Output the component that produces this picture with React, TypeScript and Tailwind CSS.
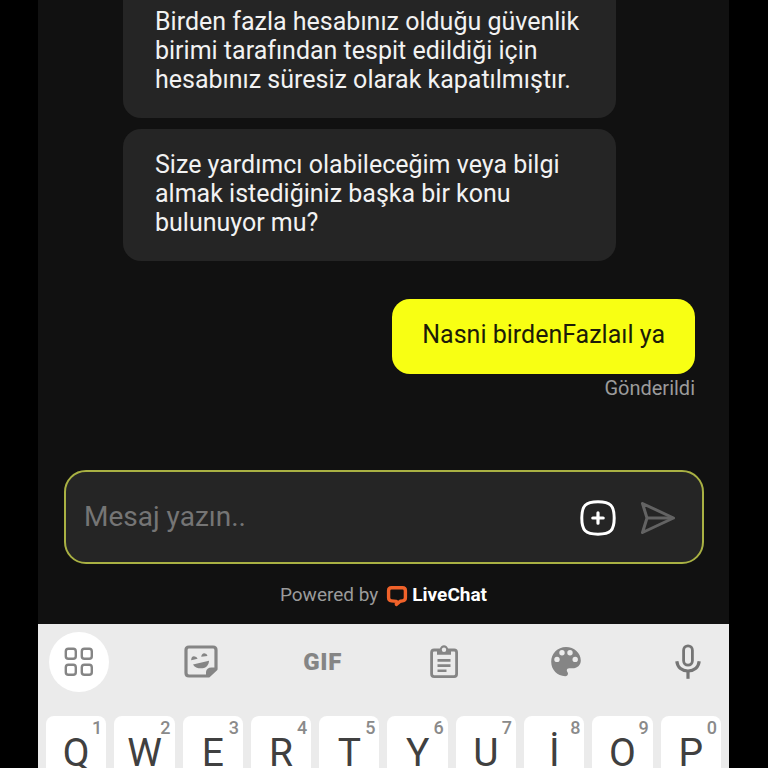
import React, { useState } from "react";

const received = [
  {
    id: 1,
    text: "Birden fazla hesabınız olduğu güvenlik birimi tarafından tespit edildiği için hesabınız süresiz olarak kapatılmıştır.",
    shape: "rounded-b-[18px]",
  },
  {
    id: 2,
    text: "Size yardımcı olabileceğim veya bilgi almak istediğiniz başka bir konu bulunuyor mu?",
    shape: "rounded-[18px]",
  },
];

const keys = [
  { letter: "Q", digit: "1" },
  { letter: "W", digit: "2" },
  { letter: "E", digit: "3" },
  { letter: "R", digit: "4" },
  { letter: "T", digit: "5" },
  { letter: "Y", digit: "6" },
  { letter: "U", digit: "7" },
  { letter: "İ", digit: "8" },
  { letter: "O", digit: "9" },
  { letter: "P", digit: "0" },
];

function GridIcon() {
  return (
    <svg width="36" height="36" viewBox="0 0 36 36" fill="none" stroke="#858585" strokeWidth="2.4">
      <rect x="4.8" y="4.8" width="10" height="10" rx="2.6" />
      <rect x="20.800" y="4.8" width="10" height="10" rx="2.6" />
      <rect x="4.8" y="20.800" width="10" height="10" rx="2.6" />
      <rect x="20.800" y="20.800" width="10" height="10" rx="2.6" />
    </svg>
  );
}

function StickerIcon() {
  return (
    <svg width="36" height="36" viewBox="0 0 36 36" fill="none">
      <path
        d="M6 3H30Q33 3 33 6V25L25.5 32H6Q3 32 3 29V6Q3 3 6 3Z"
        stroke="#858585"
        strokeWidth="3.2"
        strokeLinejoin="round"
      />
      <path d="M33.5 23.500H28.5Q23.500 23.500 23 28V33H25.5L33.8 25.5Z" fill="#858585" />
      <path d="M10 20.500L26 16.800C26 20.500 23.5 23.8 19.5 24.300C15.5 24.700 11.500 23.5 10 20.500Z" fill="#858585" />
      <path d="M8.200 16.200Q8.200 12.5 11 12.300Q13.8 12.300 14.600 14.800Z" fill="#858585" />
      <path d="M18.200 12.800Q18.700 9.400 21.300 9.200Q24 9.400 24.500 12Z" fill="#858585" />
    </svg>
  );
}

function ClipboardIcon() {
  return (
    <svg width="36" height="36" viewBox="0 0 36 36" fill="none">
      <rect x="5.6" y="6" width="25" height="26.6" rx="2.5" stroke="#858585" strokeWidth="2.8" />
      <path
        d="M11 5H13.800C14.300 2.600 16 1.200 18 1.200S21.7 2.600 22.200 5H25V10.8H11Z"
        fill="#858585"
      />
      <circle cx="18" cy="5.800" r="2.2" fill="#ebebeb" />
      <path d="M11.5 16.4H24.5M11.5 21.6H24.5M11.5 26.8H20.5" stroke="#858585" strokeWidth="2.6" />
    </svg>
  );
}

function PaletteIcon() {
  return (
    <svg width="36" height="36" viewBox="0 0 36 36">
      <path
        d="M18 3C9.6 3 3.2 9.6 3.2 17.8C3.2 25.8 9.4 32.2 17.2 32.2C18.9 32.2 20 31 20 29.5C20 28.3 18.8 27.6 18.8 26.4C18.8 25 19.8 24.2 21.2 24.2H24.6C29.2 24.2 32.8 21 32.8 16.4C32.8 9 26.2 3 18 3Z"
        fill="#858585"
      />
      <g fill="#ebebeb">
        <circle cx="9" cy="15.4" r="2.7" />
        <circle cx="14" cy="8.8" r="2.7" />
        <circle cx="22" cy="8.8" r="2.7" />
        <circle cx="27.2" cy="15.4" r="2.7" />
      </g>
    </svg>
  );
}

function MicIcon() {
  return (
    <svg width="36" height="36" viewBox="0 0 36 36" fill="none" stroke="#757575" strokeWidth="2.8">
      <rect x="13.6" y="1.800" width="8.8" height="19.4" rx="4.4" />
      <path d="M6.8 17.2C7.6 23.6 12.2 27 18 27S28.4 23.6 29.2 17.2" strokeWidth="3.2" />
      <path d="M18 27V34.8" strokeWidth="3.2" />
    </svg>
  );
}

function PlusIcon() {
  return (
    <svg width="36" height="36" viewBox="0 0 36 36" fill="none" stroke="#ffffff" strokeLinecap="round">
      <path
        d="M18 1.8C30.5 1.8 34.2 5.5 34.2 18S30.5 34.2 18 34.2S1.8 30.5 1.8 18S5.5 1.8 18 1.8Z"
        strokeWidth="3"
      />
      <path d="M18 12.8V23.2M12.8 18H23.2" strokeWidth="3.2" />
    </svg>
  );
}

function SendIcon() {
  return (
    <svg
      width="36"
      height="36"
      viewBox="0 0 36 36"
      fill="none"
      stroke="#636363"
      strokeWidth="3"
      strokeLinejoin="round"
    >
      <path d="M2.5 3.5L33.5 18L2.5 32.5L7 18Z" />
      <path d="M7 18H33" />
    </svg>
  );
}

function LiveChatLogo() {
  return (
    <svg width="22" height="22" viewBox="0 0 22 22" fill="none">
      <path
        d="M5.5 2.8H16.5Q19.4 2.8 19.4 5.7V12.8Q19.4 15.6 16.6 15.9L14.2 16.2L10.4 19.4V16.4L5.4 15.9Q2.6 15.6 2.6 12.8V5.7Q2.6 2.8 5.5 2.8Z"
        stroke="#f0622a"
        strokeWidth="3.4"
        strokeLinejoin="round"
      />
    </svg>
  );
}

const tools = [
  { id: 1, label: "Menu", icon: <GridIcon />, style: "bg-white" },
  { id: 2, label: "Stickers", icon: <StickerIcon />, style: "" },
  {
    id: 3,
    label: "GIF",
    icon: <span className="text-2xl font-black tracking-wide text-[#858585]">GIF</span>,
    style: "",
  },
  { id: 4, label: "Clipboard", icon: <ClipboardIcon />, style: "" },
  { id: 5, label: "Themes", icon: <PaletteIcon />, style: "" },
  { id: 6, label: "Voice", icon: <MicIcon />, style: "" },
];

function Messages() {
  return (
    <section className="pl-[85px] pr-[34px] flex flex-col">
      <div className="flex flex-col gap-[11px]">
        {received.map((msg) => (
          <p
            key={msg.id}
            className={`w-[493px] max-w-full bg-[#252525] text-[#f2f2f2] text-[25px] leading-[29px] px-8 first:pt-[7px] pt-[21px] pb-6 ${msg.shape}`}
          >
            {msg.text}
          </p>
        ))}
      </div>
      <div className="mt-[38px] flex flex-col items-end">
        <p className="bg-[#f8ff13] text-[#1c1c08] text-[25px] leading-[29px] px-[30px] pt-[21px] pb-[25px] rounded-[18px]">
          Nasni birdenFazlaıl ya
        </p>
        <span className="text-[#9b9b9b] text-xl leading-7">Gönderildi</span>
      </div>
    </section>
  );
}

function Composer() {
  const [message, setMessage] = useState("");

  return (
    <form
      className="mt-[68px] ml-[26px] mr-[25px] h-[94px] flex items-center pl-[18px] pr-[26px] bg-[#252525] border-2 border-[#a9b143] rounded-[22px]"
      onSubmit={(e) => e.preventDefault()}
    >
      <input
        type="text"
        aria-label="Mesaj yazın"
        placeholder="Mesaj yazın.."
        value={message}
        onChange={(e) => setMessage(e.target.value)}
        className="flex-1 min-w-0 bg-transparent outline-none text-[28px] text-white placeholder:text-[#757575]"
      />
      <div className="flex items-center gap-6 pt-[2px]">
        <button type="button" aria-label="Ekle">
          <PlusIcon />
        </button>
        <button type="submit" aria-label="Gönder">
          <SendIcon />
        </button>
      </div>
    </form>
  );
}

function Keyboard() {
  return (
    <section className="bg-[#ebebeb] flex-1 pt-2">
      <div className="flex justify-between px-[11px]">
        {tools.map((tool) => (
          <button
            key={tool.id}
            type="button"
            aria-label={tool.label}
            className={`size-[60px] rounded-full flex items-center justify-center ${tool.style}`}
          >
            {tool.icon}
          </button>
        ))}
      </div>
      <div className="mt-6 flex gap-2 px-2">
        {keys.map((key) => (
          <button
            key={key.letter}
            type="button"
            className="relative flex-1 h-[88px] pt-[22px] flex items-start justify-center bg-white rounded-lg text-[#404040] text-[39px] leading-[30px]"
          >
            {key.letter}
            <span className="absolute top-0 right-1 text-[#8a8a8a] text-lg leading-6 font-medium">
              {key.digit}
            </span>
          </button>
        ))}
      </div>
    </section>
  );
}

function App() {
  return (
    <div className="h-screen overflow-hidden bg-black pl-[38px] pr-[39px] font-[Roboto,sans-serif]">
      <main className="min-h-full bg-[#111111] flex flex-col">
        <Messages />
        <Composer />
        <a
          href="#livechat"
          className="h-[60px] pt-[2px] flex items-center justify-center text-[#9b9b9b] text-[19px]"
        >
          Powered by
          <span className="ml-2 mr-1 pt-[2px]">
            <LiveChatLogo />
          </span>
          <span className="text-white font-bold">LiveChat</span>
        </a>
        <Keyboard />
      </main>
    </div>
  );
}

export default App;
